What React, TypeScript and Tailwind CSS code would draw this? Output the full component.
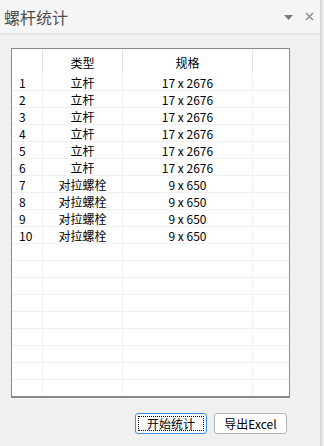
import React from "react";

type Row = { no: string; kind: string; spec: string };

const data: Row[] = [
  { no: "1", kind: "立杆", spec: "17 x 2676" },
  { no: "2", kind: "立杆", spec: "17 x 2676" },
  { no: "3", kind: "立杆", spec: "17 x 2676" },
  { no: "4", kind: "立杆", spec: "17 x 2676" },
  { no: "5", kind: "立杆", spec: "17 x 2676" },
  { no: "6", kind: "立杆", spec: "17 x 2676" },
  { no: "7", kind: "对拉螺栓", spec: "9 x 650" },
  { no: "8", kind: "对拉螺栓", spec: "9 x 650" },
  { no: "9", kind: "对拉螺栓", spec: "9 x 650" },
  { no: "10", kind: "对拉螺栓", spec: "9 x 650" },
];

// pad the grid with empty rows like the desktop control does
const rows: Row[] = [...data, ...Array.from({ length: 9 }, () => ({ no: "", kind: "", spec: "" }))];

const font = { fontFamily: '"Noto Sans CJK SC", "Noto Sans", sans-serif' };

export default function App() {
  return (
    <div className="w-[324px] h-[446px] flex bg-[#f0f0f0] overflow-hidden text-black" style={font}>
      <div className="w-[322px] h-full flex flex-col border-r-2 border-[#d6d6d6]">
        {/* title bar */}
        <div className="h-[35px] shrink-0 bg-[#f5f5f5] border-b-2 border-[#e6e6e6] flex items-center pl-[4px] pr-[6px]">
          <span className="text-[16px] leading-none text-[#4d4d4d]">螺杆统计</span>
          <div className="ml-auto flex items-center gap-[12px]">
            <svg width="9" height="6" viewBox="0 0 9 6" className="mt-[2px]">
              <path d="M0 0 H9 L4.5 5 Z" fill="#7a7a7a" />
            </svg>
            <svg width="9" height="9" viewBox="0 0 9 9">
              <path d="M1 1 L8 8 M8 1 L1 8" stroke="#8a8a8a" strokeWidth="1.4" />
            </svg>
          </div>
        </div>

        {/* grid */}
        <div className="ml-[11px] mt-[13px] w-[279px] h-[350px] bg-white border border-[#868a91] border-b-2 overflow-hidden text-[12px]">
          <div className="h-[25px] flex">
            <div className="w-[31px] h-full py-[1px]">
              <div className="h-full border-r border-[#e3e3e3]" />
            </div>
            <div className="w-[80px] h-full py-[1px]">
              <div className="h-full border-r border-[#e3e3e3] flex items-center justify-center pt-[3px]">类型</div>
            </div>
            <div className="w-[130px] h-full py-[1px]">
              <div className="h-full border-r border-[#e3e3e3] flex items-center justify-center pt-[3px]">规格</div>
            </div>
            <div className="flex-1" />
          </div>
          {rows.map((r, i) => (
            <div key={i} className="h-[17px] flex border-b border-[#f0f0f0] leading-[16px] pt-[1px]">
              <div className="w-[31px] border-r border-[#f0f0f0] pl-[7px]">{r.no}</div>
              <div className="w-[80px] border-r border-[#f0f0f0] text-center">{r.kind}</div>
              <div className="w-[130px] border-r border-[#f0f0f0] text-center">{r.spec}</div>
              <div className="flex-1" />
            </div>
          ))}
        </div>

        {/* buttons */}
        <div className="mt-[15px] flex gap-[7px] pl-[135px]">
          <button className="w-[72px] h-[21px] rounded-[3px] border border-[#3d8ee0] bg-[#fdfdfd] p-[2px] text-[12px] leading-none">
            <div className="w-full h-full border border-dotted border-black flex items-center justify-center">开始统计</div>
          </button>
          <button className="w-[73px] h-[21px] rounded-[3px] border border-[#b5b5b5] bg-[#fdfdfd] text-[12px] leading-none flex items-center justify-center">
            导出Excel
          </button>
        </div>
      </div>
    </div>
  );
}
